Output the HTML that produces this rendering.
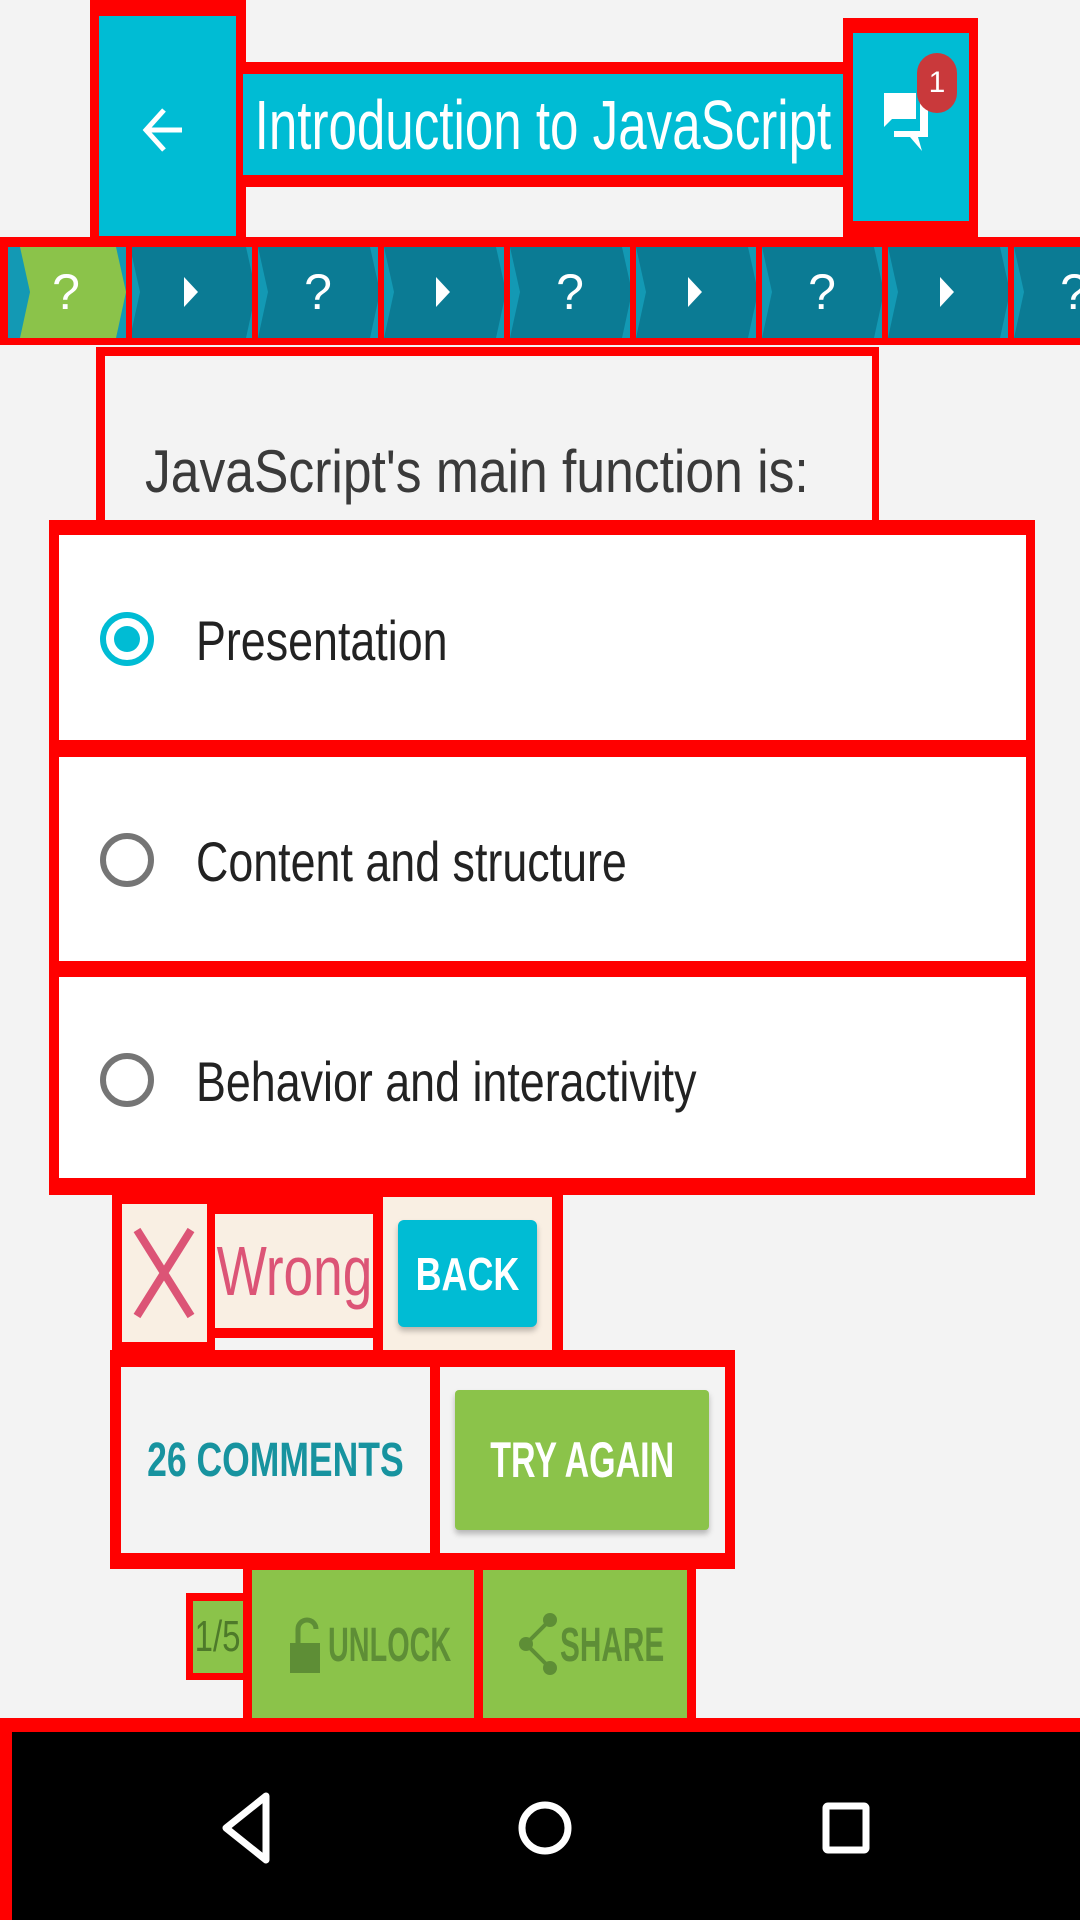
<!DOCTYPE html>
<html><head><meta charset="utf-8"><style>
*{margin:0;padding:0;box-sizing:border-box}
body{width:1080px;height:1920px;background:#f3f3f3;position:relative;overflow:hidden;font-family:"Liberation Sans",sans-serif}
.a{position:absolute}
.r{position:absolute;background:#ff0000}
.t{position:absolute;display:flex;align-items:center;justify-content:center}
</style></head><body>
<!-- header -->
<div class="r" style="left:90px;top:0;width:156px;height:240px"></div>
<div class="a" style="left:99px;top:16px;width:137px;height:220px;background:#00bcd4"></div>
<svg class="a" style="left:140px;top:100px" width="50" height="60" viewBox="0 0 50 60"><path d="M42 30H8M24 10L6 30l18 20" stroke="#fff" stroke-width="5" fill="none"/></svg>
<div class="r" style="left:240px;top:62px;width:608px;height:125px"></div>
<div class="t" style="left:243px;top:74px;width:600px;height:101px;background:#00bcd4;color:#fff;font-size:70px;white-space:nowrap;overflow:hidden"><span style="display:inline-block;transform:scaleX(0.73)">Introduction to JavaScript</span></div>
<div class="r" style="left:843px;top:18px;width:135px;height:219px"></div>
<div class="a" style="left:853px;top:33px;width:116px;height:188px;background:#00bcd4"></div>
<svg class="a" style="left:880px;top:85px" width="60" height="80" viewBox="0 0 60 80"><path d="M4 8h32v26H12l-8 8z" fill="#fff"/><path d="M40 18h8v34h-10l4 14-12-14H14v-6h26z" fill="#fff"/></svg>
<div class="t" style="left:917px;top:53px;width:40px;height:60px;border-radius:20px;background:#c9393b;color:#fff;font-size:30px">1</div>
<!-- progress -->
<div class="r" style="left:0;top:237px;width:1080px;height:108px"></div>
<div class="a" style="left:8px;top:247px;width:1072px;height:91px;background:#1399b4"></div>
<svg class="a" style="left:8px;top:247px" width="1072" height="91">
<polygon points="12,0 108,0 118,45 108,91 12,91 22,45" fill="#8bc34a"/>
<g fill="#0b7b94">
<polygon points="124,0 240,0 250,45 240,91 124,91 134,45" transform="translate(-2,0)"/>
<polygon points="250,0 362,0 372,45 362,91 250,91 260,45"/>
<polygon points="376,0 488,0 498,45 488,91 376,91 386,45"/>
<polygon points="502,0 614,0 624,45 614,91 502,91 512,45"/>
<polygon points="628,0 740,0 750,45 740,91 628,91 638,45"/>
<polygon points="754,0 866,0 876,45 866,91 754,91 764,45"/>
<polygon points="880,0 992,0 1002,45 992,91 880,91 890,45"/>
<polygon points="1006,0 1072,0 1072,91 1006,91 1016,45"/>
</g>
<g fill="#ff0000"><rect x="118" y="0" width="6" height="91"/><rect x="244" y="0" width="6" height="91"/><rect x="370" y="0" width="6" height="91"/><rect x="496" y="0" width="6" height="91"/><rect x="622" y="0" width="6" height="91"/><rect x="748" y="0" width="6" height="91"/><rect x="874" y="0" width="6" height="91"/><rect x="1000" y="0" width="6" height="91"/></g>
<g fill="#fff" font-family="Liberation Sans" font-size="50" text-anchor="middle">
<text x="58" y="62">?</text><text x="310" y="62">?</text><text x="562" y="62">?</text><text x="814" y="62">?</text><text x="1066" y="62">?</text>
<polygon points="176,30 190,45 176,60"/><polygon points="428,30 442,45 428,60"/><polygon points="680,30 694,45 680,60"/><polygon points="932,30 946,45 932,60"/>
</g>
</svg>
<!-- question -->
<div class="r" style="left:96px;top:347px;width:783px;height:180px"></div>
<div class="a" style="left:105px;top:356px;width:767px;height:171px;background:#f3f3f3"></div>
<div class="a" style="left:145px;top:437px;font-size:60px;color:#3a3a3a;white-space:nowrap;transform:scaleX(.86);transform-origin:left">JavaScript's main function is:</div>
<!-- options -->
<div class="r" style="left:49px;top:520px;width:986px;height:675px"></div>
<div class="a" style="left:59px;top:535px;width:967px;height:205px;background:#fff"></div>
<div class="a" style="left:59px;top:757px;width:967px;height:204px;background:#fff"></div>
<div class="a" style="left:59px;top:977px;width:967px;height:201px;background:#fff"></div>
<div class="a" style="left:100px;top:612px;width:54px;height:54px;border-radius:50%;border:6px solid #00bcd4"></div>
<div class="a" style="left:114px;top:626px;width:26px;height:26px;border-radius:50%;background:#00bcd4"></div>
<div class="a" style="left:100px;top:833px;width:54px;height:54px;border-radius:50%;border:6px solid #757575"></div>
<div class="a" style="left:100px;top:1053px;width:54px;height:54px;border-radius:50%;border:6px solid #757575"></div>
<div class="a" style="left:196px;top:608px;font-size:56px;color:#222;transform:scaleX(.8);transform-origin:left;white-space:nowrap">Presentation</div>
<div class="a" style="left:196px;top:829px;font-size:56px;color:#222;transform:scaleX(.8);transform-origin:left;white-space:nowrap">Content and structure</div>
<div class="a" style="left:196px;top:1049px;font-size:56px;color:#222;transform:scaleX(.8);transform-origin:left;white-space:nowrap">Behavior and interactivity</div>
<!-- wrong row -->
<div class="r" style="left:112px;top:1195px;width:451px;height:155px"></div>
<div class="a" style="left:122px;top:1204px;width:85px;height:138px;background:#f9efe3"></div>
<svg class="a" style="left:133px;top:1226px" width="62" height="94" viewBox="0 0 62 94"><path d="M4 4L58 90M58 4L4 90" stroke="#dc5476" stroke-width="8"/></svg>
<div class="a" style="left:207px;top:1195px;width:8px;height:155px;background:#ff0000"></div>
<div class="a" style="left:215px;top:1214px;width:158px;height:114px;background:#f9efe3"></div>
<div class="a" style="left:215px;top:1338px;width:158px;height:12px;background:#f3f3f3"></div>
<div class="t" style="left:215px;top:1214px;width:158px;height:114px;color:#dc5476;font-size:70px;overflow:hidden"><span style="transform:scaleX(.76);display:inline-block">Wrong</span></div>
<div class="a" style="left:383px;top:1197px;width:169px;height:153px;background:#f9efe3"></div>
<div class="t" style="left:398px;top:1220px;width:139px;height:107px;background:#00bcd4;border-radius:6px;color:#fff;font-size:46px;font-weight:bold;box-shadow:0 4px 6px rgba(0,0,0,.25)"><span style="transform:scaleX(.78);display:inline-block">BACK</span></div>
<!-- comments row -->
<div class="r" style="left:110px;top:1350px;width:625px;height:219px"></div>
<div class="a" style="left:121px;top:1367px;width:309px;height:186px;background:#f3f3f3"></div>
<div class="t" style="left:121px;top:1367px;width:309px;height:186px;color:#17939f;font-size:48px;font-weight:bold"><span style="transform:scaleX(.74);display:inline-block;white-space:nowrap">26 COMMENTS</span></div>
<div class="a" style="left:440px;top:1367px;width:285px;height:186px;background:#f3f3f3"></div>
<div class="t" style="left:455px;top:1390px;width:254px;height:140px;background:#8bc34a;border-radius:4px;color:#fff;font-size:50px;font-weight:bold;box-shadow:0 4px 6px rgba(0,0,0,.25)"><span style="transform:scaleX(.68);display:inline-block;white-space:nowrap">TRY AGAIN</span></div>
<!-- bottom row -->
<div class="r" style="left:186px;top:1593px;width:60px;height:87px"></div>
<div class="t" style="left:193px;top:1601px;width:50px;height:72px;background:#8bc34a;color:#4e7a2a;font-size:44px"><span style="transform:scaleX(.75);display:inline-block">1/5</span></div>
<div class="r" style="left:243px;top:1569px;width:453px;height:151px"></div>
<div class="a" style="left:252px;top:1570px;width:222px;height:150px;background:#8bc34a"></div>
<svg class="a" style="left:290px;top:1615px" width="32" height="60" viewBox="0 0 32 60"><path d="M8 28V14a9 9 0 0 1 18 0" stroke="#5e8e36" stroke-width="5" fill="none"/><rect x="0" y="28" width="30" height="30" fill="#5e8e36"/></svg>
<div class="a" style="left:328px;top:1618px;font-size:48px;font-weight:bold;color:#5e8e36;transform:scaleX(.6);transform-origin:left">UNLOCK</div>
<div class="a" style="left:483px;top:1570px;width:204px;height:150px;background:#8bc34a"></div>
<svg class="a" style="left:518px;top:1612px" width="40" height="64" viewBox="0 0 40 64"><circle cx="32" cy="8" r="7" fill="#5e8e36"/><circle cx="8" cy="32" r="7" fill="#5e8e36"/><circle cx="32" cy="56" r="7" fill="#5e8e36"/><path d="M32 8L8 32L32 56" stroke="#5e8e36" stroke-width="4" fill="none"/></svg>
<div class="a" style="left:560px;top:1618px;font-size:48px;font-weight:bold;color:#5e8e36;transform:scaleX(.62);transform-origin:left">SHARE</div>
<!-- nav -->
<div class="r" style="left:0;top:1718px;width:1080px;height:202px"></div>
<div class="a" style="left:12px;top:1732px;width:1068px;height:188px;background:#000"></div>
<svg class="a" style="left:0;top:1732px" width="1080" height="188">
<polygon points="266,64 226,96 266,128" fill="none" stroke="#fff" stroke-width="7" stroke-linejoin="round"/>
<circle cx="545" cy="96" r="23" fill="none" stroke="#fff" stroke-width="7"/>
<rect x="826" y="74" width="40" height="44" rx="2" fill="none" stroke="#fff" stroke-width="7"/>
</svg>
</body></html>
